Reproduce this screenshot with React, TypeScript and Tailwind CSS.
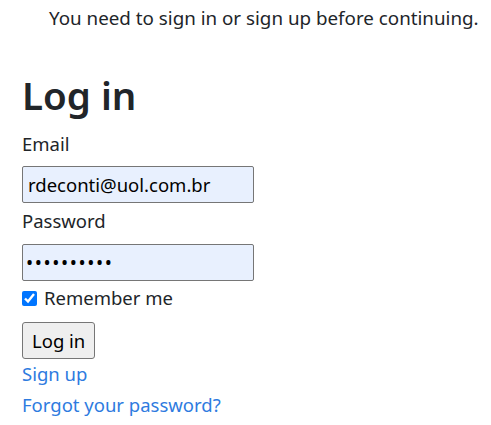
import { useState } from "react";

function App() {
  const [email, setEmail] = useState<string>("rdeconti@uol.com.br");
  const [password, setPassword] = useState<string>("1234567890");
  const [remember, setRemember] = useState<boolean>(true);

  return (
    <div
      className="bg-white text-[#212529] text-[18.5px] leading-[30px] min-h-[425px]"
      style={{ fontFamily: '"Noto Sans", "Open Sans", sans-serif' }}
    >
      <p className="pt-[3px] pl-[49px] whitespace-nowrap text-[18.8px]">
        You need to sign in or sign up before continuing.
      </p>
      <div className="pl-[22px]">
        <h2 className="mt-[38px] text-[38.5px] leading-[48px] font-semibold">Log in</h2>
        <form onSubmit={(e) => e.preventDefault()}>
          <div className="mt-[10px]">
            <label htmlFor="email">Email</label>
            <br />
            <input
              id="email"
              type="email"
              value={email}
              onChange={(e) => setEmail(e.target.value)}
              className="mt-[7px] w-[232px] h-[37px] px-[5px] bg-[#e8f0fe] border border-[#767676] rounded-[2px] text-[18.5px] text-black outline-none"
            />
          </div>
          <div className="mt-[3px]">
            <label htmlFor="password">Password</label>
            <br />
            <input
              id="password"
              type="password"
              value={password}
              onChange={(e) => setPassword(e.target.value)}
              className="mt-[8px] w-[232px] h-[37px] px-[3px] bg-[#e8f0fe] border border-[#767676] rounded-[2px] text-[19px] tracking-[1.6px] text-black outline-none"
            />
          </div>
          <div className="flex items-center gap-[7px] mt-[2px]">
            <input
              id="remember"
              type="checkbox"
              checked={remember}
              onChange={(e) => setRemember(e.target.checked)}
              className="w-[15px] h-[15px] m-0 accent-[#0075ff]"
            />
            <label htmlFor="remember">Remember me</label>
          </div>
          <div className="mt-[9px]">
            <button
              type="submit"
              className="h-[37px] px-[9px] bg-[#efefef] border border-[#767676] rounded-[3px] text-black text-[18.5px] leading-[30px]"
            >
              Log in
            </button>
          </div>
        </form>
        <a href="#" className="block text-[#2e7bdf]">Sign up</a>
        <a href="#" className="block mt-[1px] text-[#2e7bdf]">Forgot your password?</a>
      </div>
    </div>
  );
}

export default App;
